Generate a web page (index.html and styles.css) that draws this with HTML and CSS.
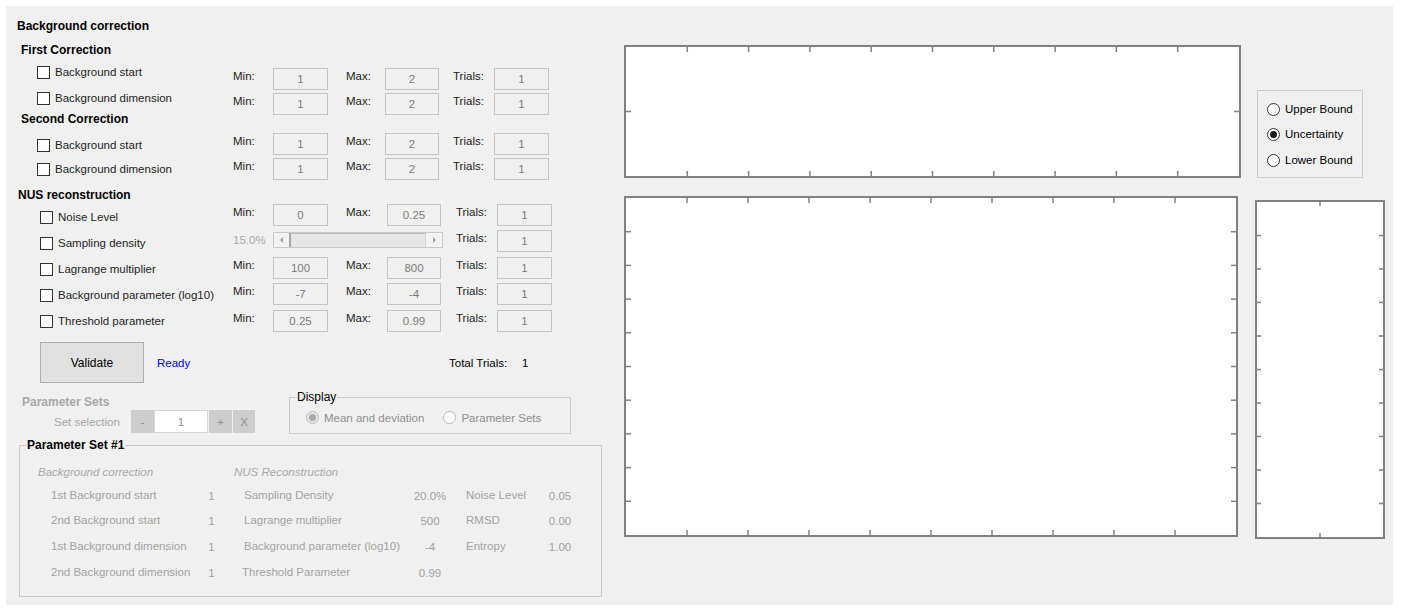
FILE: index.html
```html
<!DOCTYPE html>
<html>
<head>
<meta charset="utf-8">
<title>Background correction</title>
<link rel="stylesheet" href="styles.css">
</head>
<body>
<div class="window">
  <div class="left">
    <div class="setup">
      <div class="checks">
        <div class="h1">Background correction</div>
        <div class="h2">First Correction</div>
        <div class="cb"><span class="box"></span>Background start</div>
        <div class="cb"><span class="box"></span>Background dimension</div>
        <div class="h2">Second Correction</div>
        <div class="cb"><span class="box"></span>Background start</div>
        <div class="cb"><span class="box"></span>Background dimension</div>
        <div class="h2 nus">NUS reconstruction</div>
        <div class="cb nus"><span class="box"></span>Noise Level</div>
        <div class="cb nus"><span class="box"></span>Sampling density</div>
        <div class="cb nus"><span class="box"></span>Lagrange multiplier</div>
        <div class="cb nus"><span class="box"></span>Background parameter (log10)</div>
        <div class="cb nus"><span class="box"></span>Threshold parameter</div>
      </div>
      <div class="fields">
        <div class="frow">
          <span class="lbl">Min:</span><span class="field">1</span>
          <span class="lbl max">Max:</span><span class="field w54">2</span>
          <span class="lbl trials">Trials:</span><span class="field">1</span>
        </div>
        <div class="frow">
          <span class="lbl">Min:</span><span class="field">1</span>
          <span class="lbl max">Max:</span><span class="field w54">2</span>
          <span class="lbl trials">Trials:</span><span class="field">1</span>
        </div>
        <div class="frow">
          <span class="lbl">Min:</span><span class="field">1</span>
          <span class="lbl max">Max:</span><span class="field w54">2</span>
          <span class="lbl trials">Trials:</span><span class="field">1</span>
        </div>
        <div class="frow">
          <span class="lbl">Min:</span><span class="field">1</span>
          <span class="lbl max">Max:</span><span class="field w54">2</span>
          <span class="lbl trials">Trials:</span><span class="field">1</span>
        </div>
        <div class="frow nus">
          <span class="lbl">Min:</span><span class="field">0</span>
          <span class="lbl max">Max:</span><span class="field w54">0.25</span>
          <span class="lbl trials">Trials:</span><span class="field">1</span>
        </div>
        <div class="frow nus">
          <span class="lbl pct">15.0%</span>
          <div class="slider">
            <span class="sl-btn"><span class="arr-l"></span></span>
            <span class="sl-thumb"></span>
            <span class="sl-track"></span>
            <span class="sl-btn r"><span class="arr-r"></span></span>
          </div>
          <span class="lbl trials sl">Trials:</span><span class="field">1</span>
        </div>
        <div class="frow nus">
          <span class="lbl">Min:</span><span class="field">100</span>
          <span class="lbl max">Max:</span><span class="field w54">800</span>
          <span class="lbl trials">Trials:</span><span class="field">1</span>
        </div>
        <div class="frow nus">
          <span class="lbl">Min:</span><span class="field">-7</span>
          <span class="lbl max">Max:</span><span class="field w54">-4</span>
          <span class="lbl trials">Trials:</span><span class="field">1</span>
        </div>
        <div class="frow nus">
          <span class="lbl">Min:</span><span class="field">0.25</span>
          <span class="lbl max">Max:</span><span class="field w54">0.99</span>
          <span class="lbl trials">Trials:</span><span class="field">1</span>
        </div>
      </div>
    </div>

    <div class="actions">
      <div class="validate">Validate</div>
      <span class="ready">Ready</span>
      <span class="total">Total Trials:</span>
      <span class="total-val">1</span>
    </div>

    <div class="sets">
      <div class="sets-left">
        <div class="h-sets">Parameter Sets</div>
        <div class="selrow">
          <span class="sel-lbl">Set selection</span>
          <span class="sbtn">-</span>
          <span class="sfield">1</span>
          <span class="sbtn gap">+</span>
          <span class="sbtn gap narrow">X</span>
        </div>
      </div>
      <fieldset class="display">
        <legend>Display</legend>
        <div class="drow">
          <span class="radio dis first"><span class="rc dis on"></span>Mean and deviation</span>
          <span class="radio dis second"><span class="rc dis"></span>Parameter Sets</span>
        </div>
      </fieldset>
    </div>

    <fieldset class="pset">
      <legend>Parameter Set #1</legend>
      <div class="pgrid">
        <span class="phead c12">Background correction</span>
        <span class="phead c3">NUS Reconstruction</span>

        <span class="pl">1st Background start</span><span class="pv">1</span>
        <span class="pl2">Sampling Density</span><span class="pv">20.0%</span>
        <span class="pl3">Noise Level</span><span class="pv">0.05</span>

        <span class="pl">2nd Background start</span><span class="pv">1</span>
        <span class="pl2">Lagrange multiplier</span><span class="pv">500</span>
        <span class="pl3">RMSD</span><span class="pv">0.00</span>

        <span class="pl">1st Background dimension</span><span class="pv">1</span>
        <span class="pl2">Background parameter (log10)</span><span class="pv">-4</span>
        <span class="pl3">Entropy</span><span class="pv">1.00</span>

        <span class="pl">2nd Background dimension</span><span class="pv">1</span>
        <span class="pl2 thr">Threshold Parameter</span><span class="pv">0.99</span>
      </div>
    </fieldset>
  </div>

  <div class="right">
    <div class="top-row">
      <div class="plot plot-top">
        <svg class="ticks">
          <g class="tk">
            <line x1="10%" x2="10%" y1="0" y2="5"/><line x1="20%" x2="20%" y1="0" y2="5"/><line x1="30%" x2="30%" y1="0" y2="5"/>
            <line x1="40%" x2="40%" y1="0" y2="5"/><line x1="50%" x2="50%" y1="0" y2="5"/><line x1="60%" x2="60%" y1="0" y2="5"/>
            <line x1="70%" x2="70%" y1="0" y2="5"/><line x1="80%" x2="80%" y1="0" y2="5"/><line x1="90%" x2="90%" y1="0" y2="5"/>
            <svg y="100%" overflow="visible">
              <line x1="10%" x2="10%" y1="-5" y2="0"/><line x1="20%" x2="20%" y1="-5" y2="0"/><line x1="30%" x2="30%" y1="-5" y2="0"/>
              <line x1="40%" x2="40%" y1="-5" y2="0"/><line x1="50%" x2="50%" y1="-5" y2="0"/><line x1="60%" x2="60%" y1="-5" y2="0"/>
              <line x1="70%" x2="70%" y1="-5" y2="0"/><line x1="80%" x2="80%" y1="-5" y2="0"/><line x1="90%" x2="90%" y1="-5" y2="0"/>
            </svg>
            <line x1="0" x2="5" y1="50%" y2="50%"/>
            <svg x="100%" overflow="visible"><line x1="-5" x2="0" y1="50%" y2="50%"/></svg>
          </g>
        </svg>
      </div>
      <div class="bounds">
        <span class="radio"><span class="rc"></span>Upper Bound</span>
        <span class="radio"><span class="rc on"></span>Uncertainty</span>
        <span class="radio"><span class="rc"></span>Lower Bound</span>
      </div>
    </div>
    <div class="bottom-row">
      <div class="plot plot-main">
        <svg class="ticks">
          <g class="tk">
            <line x1="10%" x2="10%" y1="0" y2="5"/><line x1="20%" x2="20%" y1="0" y2="5"/><line x1="30%" x2="30%" y1="0" y2="5"/>
            <line x1="40%" x2="40%" y1="0" y2="5"/><line x1="50%" x2="50%" y1="0" y2="5"/><line x1="60%" x2="60%" y1="0" y2="5"/>
            <line x1="70%" x2="70%" y1="0" y2="5"/><line x1="80%" x2="80%" y1="0" y2="5"/><line x1="90%" x2="90%" y1="0" y2="5"/>
            <svg y="100%" overflow="visible">
              <line x1="10%" x2="10%" y1="-5" y2="0"/><line x1="20%" x2="20%" y1="-5" y2="0"/><line x1="30%" x2="30%" y1="-5" y2="0"/>
              <line x1="40%" x2="40%" y1="-5" y2="0"/><line x1="50%" x2="50%" y1="-5" y2="0"/><line x1="60%" x2="60%" y1="-5" y2="0"/>
              <line x1="70%" x2="70%" y1="-5" y2="0"/><line x1="80%" x2="80%" y1="-5" y2="0"/><line x1="90%" x2="90%" y1="-5" y2="0"/>
            </svg>
            <line x1="0" x2="5" y1="10%" y2="10%"/><line x1="0" x2="5" y1="20%" y2="20%"/><line x1="0" x2="5" y1="30%" y2="30%"/>
            <line x1="0" x2="5" y1="40%" y2="40%"/><line x1="0" x2="5" y1="50%" y2="50%"/><line x1="0" x2="5" y1="60%" y2="60%"/>
            <line x1="0" x2="5" y1="70%" y2="70%"/><line x1="0" x2="5" y1="80%" y2="80%"/><line x1="0" x2="5" y1="90%" y2="90%"/>
            <svg x="100%" overflow="visible">
              <line x1="-5" x2="0" y1="10%" y2="10%"/><line x1="-5" x2="0" y1="20%" y2="20%"/><line x1="-5" x2="0" y1="30%" y2="30%"/>
              <line x1="-5" x2="0" y1="40%" y2="40%"/><line x1="-5" x2="0" y1="50%" y2="50%"/><line x1="-5" x2="0" y1="60%" y2="60%"/>
              <line x1="-5" x2="0" y1="70%" y2="70%"/><line x1="-5" x2="0" y1="80%" y2="80%"/><line x1="-5" x2="0" y1="90%" y2="90%"/>
            </svg>
          </g>
        </svg>
      </div>
      <div class="plot plot-side">
        <svg class="ticks">
          <g class="tk">
            <line x1="50%" x2="50%" y1="0" y2="4"/>
            <svg y="100%" overflow="visible"><line x1="50%" x2="50%" y1="-4" y2="0"/></svg>
            <line x1="0" x2="4" y1="10%" y2="10%"/><line x1="0" x2="4" y1="20%" y2="20%"/><line x1="0" x2="4" y1="30%" y2="30%"/>
            <line x1="0" x2="4" y1="40%" y2="40%"/><line x1="0" x2="4" y1="50%" y2="50%"/><line x1="0" x2="4" y1="60%" y2="60%"/>
            <line x1="0" x2="4" y1="70%" y2="70%"/><line x1="0" x2="4" y1="80%" y2="80%"/><line x1="0" x2="4" y1="90%" y2="90%"/>
            <svg x="100%" overflow="visible">
              <line x1="-4" x2="0" y1="10%" y2="10%"/><line x1="-4" x2="0" y1="20%" y2="20%"/><line x1="-4" x2="0" y1="30%" y2="30%"/>
              <line x1="-4" x2="0" y1="40%" y2="40%"/><line x1="-4" x2="0" y1="50%" y2="50%"/><line x1="-4" x2="0" y1="60%" y2="60%"/>
              <line x1="-4" x2="0" y1="70%" y2="70%"/><line x1="-4" x2="0" y1="80%" y2="80%"/><line x1="-4" x2="0" y1="90%" y2="90%"/>
            </svg>
          </g>
        </svg>
      </div>
    </div>
  </div>
</div>
</body>
</html>
```

FILE: styles.css
```css
* { box-sizing: border-box; }
html, body { margin: 0; padding: 0; background: #fff; }
body {
  font-family: "Liberation Sans", Arial, sans-serif;
  font-size: 11.5px;
  color: #1e1e1e;
}
.window {
  margin: 6px 0 0 6px;
  width: 1387px;
  height: 599px;
  background: #f0f0f0;
  display: flex;
}
.left { width: 618px; flex: none; }

/* ---- setup area ---- */
.setup { display: flex; align-items: flex-start; }
.checks {
  width: 227px;
  flex: none;
  display: grid;
  grid-template-rows: 24px 22px 26px 21px 26px 24px 26px 22px 26px 26px 26px 26px 14px;
  padding-top: 13px;
}
.checks > * { height: 14px; line-height: 14px; white-space: nowrap; }
.h1 { font-weight: bold; font-size: 12px; margin-left: 11px; color: #000; }
.h2 { font-weight: bold; font-size: 12px; margin-left: 15px; color: #000; }
.h2.nus { margin-left: 12px; }
.cb { display: flex; align-items: center; margin-left: 31px; }
.cb.nus { margin-left: 34px; }
.box {
  width: 13px; height: 13px; flex: none;
  border: 1px solid #333; background: #fff;
  margin-right: 5px;
}
.fields {
  display: grid;
  grid-template-rows: 25px 40px 25px 46px 26px 27px 26px 27px 22px;
  padding-top: 62px;
}
.frow { display: flex; align-items: flex-start; height: 22px; }
.lbl { line-height: 16px; width: 40px; flex: none; white-space: nowrap; }
.lbl.max { margin-left: 18px; width: 39px; }
.lbl.trials { margin-left: 14px; width: 41px; }
.frow.nus .lbl.max { width: 41px; }
.frow.nus .lbl.trials { margin-left: 15px; }
.frow.nus .lbl.trials.sl { margin-left: 13px; }
.pct { color: #a9a9a9; line-height: 20px; }
.field {
  width: 55px; height: 22px; flex: none;
  border: 1px solid #c4c4c4;
  text-align: center; line-height: 21px;
  color: #7c7c7c;
}
.field.w54 { width: 54px; }

.slider {
  width: 170px; height: 16px; margin-top: 2px; flex: none;
  display: flex;
  border: 1px solid #c9c9c9;
  background: #e6e6e6;
}
.sl-btn {
  width: 15px; flex: none;
  background: #f3f3f3;
  display: flex; align-items: center; justify-content: center;
}
.sl-btn.r { width: 17px; border-left: 1px solid #d4d4d4; }
.sl-thumb { width: 2px; flex: none; background: #a5a5a5; }
.sl-track { flex: 1; border-top: 1px solid #bdbdbd; }
.arr-l, .arr-r { width: 0; height: 0; border-top: 3px solid transparent; border-bottom: 3px solid transparent; }
.arr-l { border-right: 3px solid #a0a0a0; }
.arr-r { border-left: 3px solid #a0a0a0; }

/* ---- actions ---- */
.actions { display: flex; align-items: center; margin-top: 10px; height: 41px; }
.validate {
  margin-left: 34px; width: 104px; height: 41px; flex: none;
  background: #e1e1e1; border: 1px solid #adadad;
  display: flex; align-items: center; justify-content: center;
  font-size: 12px; color: #000;
}
.ready { margin-left: 13px; width: 292px; color: #0000ff; flex: none; }
.total { width: 73px; flex: none; color: #000; }
.total-val { color: #000; }

/* ---- sets ---- */
.sets { display: flex; align-items: flex-start; margin-top: 7px; }
.sets-left { width: 283px; flex: none; }
.h-sets {
  font-weight: bold; font-size: 12px; line-height: 14px;
  color: #a8a8a8; margin: 5px 0 0 16px;
}
.selrow { display: flex; align-items: center; height: 23px; margin-top: 1px; }
.sel-lbl { margin-left: 48px; width: 77px; color: #a8a8a8; flex: none; }
.sbtn {
  width: 23px; height: 23px; flex: none;
  background: #cdcdcd; color: #8f8f8f;
  display: flex; align-items: center; justify-content: center;
}
.sbtn.gap { margin-left: 1px; }
.sbtn.narrow { width: 22px; }
.sfield {
  width: 54px; height: 23px; flex: none;
  background: #fff; border: 1px solid #d7d7d7; color: #8f8f8f;
  display: flex; align-items: center; justify-content: center;
}
.display {
  width: 282px; min-width: 0; margin: 0;
  padding: 0 0 2px 6px;
  border: 1px solid #cbcbcb;
}
.display legend { padding: 0 1px; line-height: 14px; font-size: 12px; color: #000; }
.drow { height: 27px; display: flex; align-items: center; }
.radio { display: flex; align-items: center; white-space: nowrap; }
.radio.first { margin-left: 10px; }
.radio.second { margin-left: 19px; }
.radio.dis { color: #8e8e8e; }
.rc {
  width: 13px; height: 13px; flex: none;
  border-radius: 50%; border: 1px solid #333; background: #fff;
  margin-right: 5px; position: relative;
}
.rc.on::after {
  content: ""; position: absolute; left: 2px; top: 2px;
  width: 7px; height: 7px; border-radius: 50%; background: #1a1a1a;
}
.rc.dis { border-color: #bcbcbc; background: #fff; }
.rc.dis.on { background: #e6e6e6; }
.rc.dis.on::after { background: #a9a9a9; }

/* ---- parameter set ---- */
.pset {
  margin: 4px 0 0 13px; width: 583px; min-width: 0;
  padding: 0 0 17px 0;
  border: 1px solid #c9c9c9;
}
.pset legend {
  margin-left: 6px; padding: 0 1px;
  font-weight: bold; font-size: 12px; line-height: 14px; color: #000;
}
.pgrid {
  display: grid;
  grid-template-columns: 185px 13px 192px 40px 90px 40px;
  grid-template-rows: 23px 25px 26px 26px 14px;
  padding-top: 13px;
  color: #a3a3a3;
}
.pgrid > * { line-height: 14px; white-space: nowrap; }
.phead { font-style: italic; color: #a9a9a9; }
.phead.c12 { grid-column: 1 / 3; margin-left: 18px; }
.phead.c3 { grid-column: 3 / 7; margin-left: 16px; }
.pl { margin-left: 31px; }
.pl2 { margin-left: 26px; }
.pl2.thr { margin-left: 24px; }
.pl3 { margin-left: 16px; }
.pv { text-align: center; margin-top: 1px; }

/* ---- plots ---- */
.right { flex: none; width: 769px; }
.top-row { display: flex; align-items: flex-start; margin-top: 39px; }
.plot { position: relative; background: #fff; border: 2px solid #808080; flex: none; }
.plot-top { width: 617px; height: 133px; }
.bounds {
  margin: 45px 0 0 16px; width: 106px; height: 88px; flex: none;
  border: 1px solid #cbcbcb;
  display: grid; grid-template-rows: 25px 26px 14px;
  padding: 11px 0 0 9px;
  color: #000;
}
.bounds .radio { height: 14px; }
.bottom-row { display: flex; align-items: flex-start; margin-top: 18px; }
.plot-main { width: 614px; height: 341px; }
.plot-side { width: 130px; height: 339px; margin: 4px 0 0 17px; }
.ticks { position: absolute; left: 0; top: 0; width: 100%; height: 100%; overflow: visible; }
.tk { stroke: #808080; stroke-width: 1.5; }
```
